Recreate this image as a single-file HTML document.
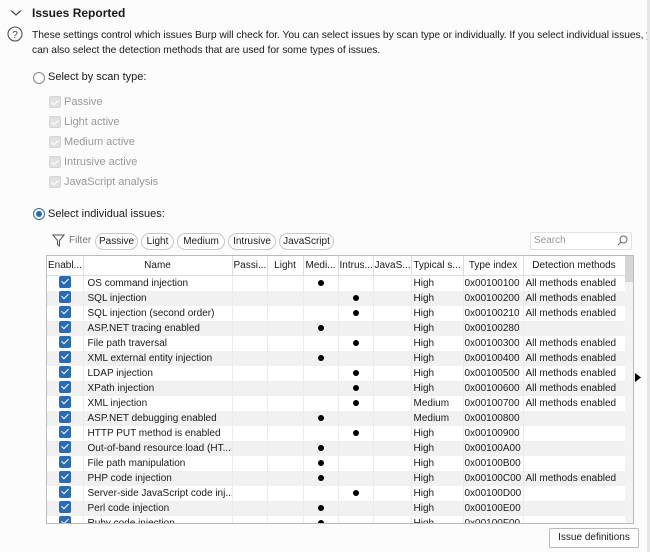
<!DOCTYPE html>
<html><head><style>
*{margin:0;padding:0;box-sizing:border-box}
body{width:650px;height:552px;background:#fcfcfc;font-family:"Liberation Sans",sans-serif;font-size:11px;color:#1a1a1a;position:relative;overflow:hidden}
.a{position:absolute;white-space:nowrap}
.gray{color:#999}
.cb{position:absolute;width:12px;height:12px;border-radius:2px;background:#e2e2e2;border:1px solid #d6d6d6}
.cb:after{content:"";position:absolute;left:3px;top:1px;width:3px;height:6px;border:solid #fff;border-width:0 1.5px 1.5px 0;transform:rotate(45deg)}
.pill{position:absolute;top:233px;height:17px;border:1px solid #c8c8c8;border-radius:9px;background:#fff;line-height:15px;font-size:10px;text-align:center}
table{position:absolute;left:0;top:0;border-collapse:collapse;table-layout:fixed;width:578px;background:#fff}
td,th{height:15px;font-size:10px;white-space:nowrap;overflow:hidden;padding:0 1px;border-right:1px solid #ececec;font-weight:normal;line-height:15px}
th{height:19px;border-bottom:1px solid #e0e0e0;border-right:1px solid #ddd;text-align:center}
td:nth-child(2){padding-left:4px}
td:nth-child(8){padding-left:2px}
td:nth-child(10){padding-left:2px}
tr.g td{background:#f1f1f1}
.c{text-align:center}
.k{display:inline-block;width:12px;height:12px;background:#2a6bb5;border-radius:2px;position:relative;vertical-align:middle;margin-top:-2px}
.k:after{content:"";position:absolute;left:4px;top:1.5px;width:3px;height:6px;border:solid #fff;border-width:0 1.5px 1.5px 0;transform:rotate(45deg)}
.d{display:inline-block;width:6px;height:6px;background:#000;border-radius:50%;vertical-align:middle}
</style></head><body>
<svg class="a" style="left:10px;top:9px" width="12" height="8"><path d="M1 1.5 L6 6 L11 1.5" stroke="#444" fill="none" stroke-width="1.2"/></svg>
<div class="a" style="left:32px;top:6px;font-weight:bold;font-size:12px">Issues Reported</div>
<svg class="a" style="left:7px;top:26px" width="16" height="16"><circle cx="8" cy="8" r="7" stroke="#555" fill="none" stroke-width="1.1"/><text x="8" y="12" text-anchor="middle" font-size="10" font-family="Liberation Sans" fill="#444">?</text></svg>
<div class="a" style="left:32px;top:28px;line-height:15px;font-size:10.3px;letter-spacing:-0.05px">These settings control which issues Burp will check for. You can select issues by scan type or individually. If you select individual issues, you<br>can also select the detection methods that are used for some types of issues.</div>
<div class="a" style="left:33px;top:72px;width:12px;height:12px;border:1px solid #888;border-radius:50%;background:#fff"></div>
<div class="a" style="left:48px;top:71px">Select by scan type:</div>
<div class="cb" style="left:49px;top:96px"></div><div class="a gray" style="left:64px;top:96px">Passive</div>
<div class="cb" style="left:49px;top:116px"></div><div class="a gray" style="left:64px;top:116px">Light active</div>
<div class="cb" style="left:49px;top:136px"></div><div class="a gray" style="left:64px;top:136px">Medium active</div>
<div class="cb" style="left:49px;top:156px"></div><div class="a gray" style="left:64px;top:156px">Intrusive active</div>
<div class="cb" style="left:49px;top:176px"></div><div class="a gray" style="left:64px;top:176px">JavaScript analysis</div>
<div class="a" style="left:33px;top:208px;width:12px;height:12px;border:1px solid #2a6bb5;border-radius:50%;background:#fff"><div style="position:absolute;left:2px;top:2px;width:6px;height:6px;border-radius:50%;background:#2a6bb5"></div></div>
<div class="a" style="left:48px;top:208px">Select individual issues:</div>
<svg class="a" style="left:52px;top:234px" width="13" height="13"><path d="M1 1 H12 L7.5 6.5 V12 L5.5 10.5 V6.5 Z" stroke="#555" fill="none" stroke-width="1"/></svg>
<div class="a" style="left:69px;top:235px;color:#777;font-size:10px">Filter</div>
<div class="pill" style="left:95px;width:43px">Passive</div>
<div class="pill" style="left:141px;width:33px">Light</div>
<div class="pill" style="left:177px;width:48px">Medium</div>
<div class="pill" style="left:228px;width:48px">Intrusive</div>
<div class="pill" style="left:279px;width:55px">JavaScript</div>
<div class="a" style="left:530px;top:232px;width:102px;height:18px;border:1px solid #e2e2e2;background:#fff;border-radius:2px;color:#999;padding-left:3px;line-height:16px;font-size:10px">Search</div>
<svg class="a" style="left:617px;top:235px" width="11" height="11"><circle cx="6.5" cy="4.5" r="3.5" stroke="#666" fill="none"/><path d="M4 7 L1 10" stroke="#666"/></svg>
<div class="a" style="left:46px;top:255px;width:588px;height:269px;border:1px solid #bbb;background:#fff"></div>
<div class="a" style="left:625px;top:256px;width:8px;height:267px;background:#f3f3f3"></div>
<div class="a" style="left:625px;top:256px;width:8px;height:26px;background:#d6d6d6"></div>
<div class="a" style="left:47px;top:256px;width:578px;height:267px;overflow:hidden">
<table>
<colgroup><col style="width:36px"><col style="width:149px"><col style="width:35px"><col style="width:36px"><col style="width:35px"><col style="width:35px"><col style="width:38px"><col style="width:52px"><col style="width:60px"><col style="width:102px"></colgroup>
<tr><th>Enabl...</th><th>Name</th><th>Passi...</th><th>Light</th><th>Medi...</th><th>Intrus...</th><th>JavaS...</th><th>Typical s...</th><th>Type index</th><th>Detection methods</th></tr>
<tr><td class="c"><i class="k"></i></td><td>OS command injection</td><td></td><td></td><td class="c"><i class="d"></i></td><td></td><td></td><td>High</td><td>0x00100100</td><td>All methods enabled</td></tr>
<tr class="g"><td class="c"><i class="k"></i></td><td>SQL injection</td><td></td><td></td><td></td><td class="c"><i class="d"></i></td><td></td><td>High</td><td>0x00100200</td><td>All methods enabled</td></tr>
<tr><td class="c"><i class="k"></i></td><td>SQL injection (second order)</td><td></td><td></td><td></td><td class="c"><i class="d"></i></td><td></td><td>High</td><td>0x00100210</td><td>All methods enabled</td></tr>
<tr class="g"><td class="c"><i class="k"></i></td><td>ASP.NET tracing enabled</td><td></td><td></td><td class="c"><i class="d"></i></td><td></td><td></td><td>High</td><td>0x00100280</td><td></td></tr>
<tr><td class="c"><i class="k"></i></td><td>File path traversal</td><td></td><td></td><td></td><td class="c"><i class="d"></i></td><td></td><td>High</td><td>0x00100300</td><td>All methods enabled</td></tr>
<tr class="g"><td class="c"><i class="k"></i></td><td>XML external entity injection</td><td></td><td></td><td class="c"><i class="d"></i></td><td></td><td></td><td>High</td><td>0x00100400</td><td>All methods enabled</td></tr>
<tr><td class="c"><i class="k"></i></td><td>LDAP injection</td><td></td><td></td><td></td><td class="c"><i class="d"></i></td><td></td><td>High</td><td>0x00100500</td><td>All methods enabled</td></tr>
<tr class="g"><td class="c"><i class="k"></i></td><td>XPath injection</td><td></td><td></td><td></td><td class="c"><i class="d"></i></td><td></td><td>High</td><td>0x00100600</td><td>All methods enabled</td></tr>
<tr><td class="c"><i class="k"></i></td><td>XML injection</td><td></td><td></td><td></td><td class="c"><i class="d"></i></td><td></td><td>Medium</td><td>0x00100700</td><td>All methods enabled</td></tr>
<tr class="g"><td class="c"><i class="k"></i></td><td>ASP.NET debugging enabled</td><td></td><td></td><td class="c"><i class="d"></i></td><td></td><td></td><td>Medium</td><td>0x00100800</td><td></td></tr>
<tr><td class="c"><i class="k"></i></td><td>HTTP PUT method is enabled</td><td></td><td></td><td></td><td class="c"><i class="d"></i></td><td></td><td>High</td><td>0x00100900</td><td></td></tr>
<tr class="g"><td class="c"><i class="k"></i></td><td>Out-of-band resource load (HT...</td><td></td><td></td><td class="c"><i class="d"></i></td><td></td><td></td><td>High</td><td>0x00100A00</td><td></td></tr>
<tr><td class="c"><i class="k"></i></td><td>File path manipulation</td><td></td><td></td><td class="c"><i class="d"></i></td><td></td><td></td><td>High</td><td>0x00100B00</td><td></td></tr>
<tr class="g"><td class="c"><i class="k"></i></td><td>PHP code injection</td><td></td><td></td><td class="c"><i class="d"></i></td><td></td><td></td><td>High</td><td>0x00100C00</td><td>All methods enabled</td></tr>
<tr><td class="c"><i class="k"></i></td><td>Server-side JavaScript code inj...</td><td></td><td></td><td></td><td class="c"><i class="d"></i></td><td></td><td>High</td><td>0x00100D00</td><td></td></tr>
<tr class="g"><td class="c"><i class="k"></i></td><td>Perl code injection</td><td></td><td></td><td class="c"><i class="d"></i></td><td></td><td></td><td>High</td><td>0x00100E00</td><td></td></tr>
<tr><td class="c"><i class="k"></i></td><td>Ruby code injection</td><td></td><td></td><td class="c"><i class="d"></i></td><td></td><td></td><td>High</td><td>0x00100F00</td><td></td></tr>
</table></div>
<svg class="a" style="left:635px;top:373px" width="6" height="9"><path d="M0 0 L6 4.5 L0 9Z" fill="#000"/></svg>
<div class="a" style="left:549px;top:528px;width:90px;height:20px;border:1px solid #bbb;border-radius:2px;background:#fff;text-align:center;line-height:18px;font-size:10px">Issue definitions</div>
<div class="a" style="left:647px;top:0;width:3px;height:552px;background:#e6e6e6"></div>
</body></html>
